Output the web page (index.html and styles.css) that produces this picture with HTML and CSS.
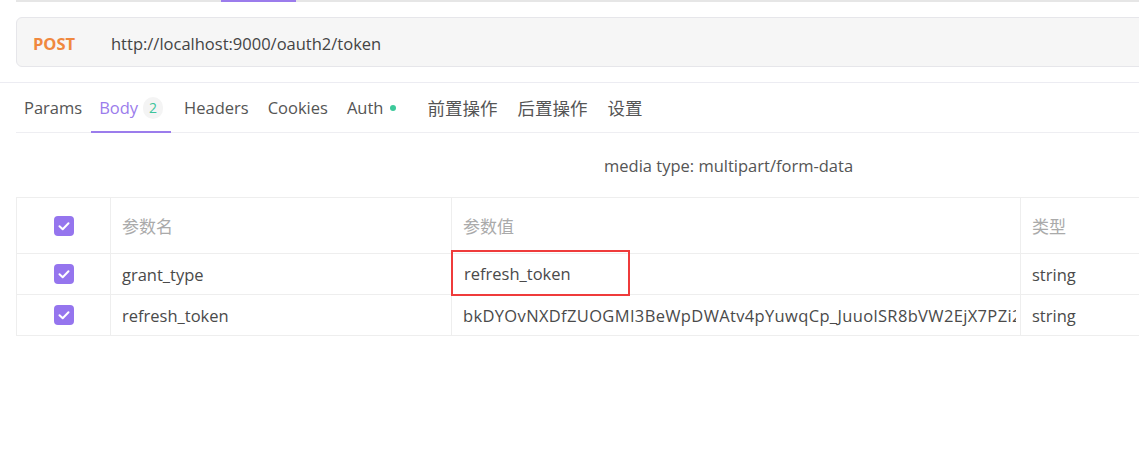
FILE: index.html
```html
<!DOCTYPE html>
<html>
<head>
<meta charset="utf-8">
<link rel="stylesheet" href="styles.css">
</head>
<body>
<div class="topline"><span class="topmark"></span></div>
<div class="urlwrap">
  <div class="urlbox">
    <span class="method">POST</span>
    <span class="url">http://localhost:9000/oauth2/token</span>
  </div>
</div>
<div class="divider"></div>
<div class="tabs">
  <span class="tab first">Params</span>
  <span class="tab active">Body <span class="badge">2</span></span>
  <span class="tab">Headers</span>
  <span class="tab">Cookies</span>
  <span class="tab">Auth <span class="dot"></span></span>
  <span class="tab cjk">前置操作</span>
  <span class="tab cjk">后置操作</span>
  <span class="tab cjk">设置</span>
</div>
<div class="media">media type: multipart/form-data</div>
<div class="table">
  <div class="row head">
    <div class="cell c-check"><span class="cb"><svg viewBox="0 0 20 20" width="20" height="20"><path d="M5.5 10.2 L8.7 13.2 L14.5 7.3" fill="none" stroke="#fff" stroke-width="2" stroke-linecap="round" stroke-linejoin="round"/></svg></span></div>
    <div class="cell c-name muted">参数名</div>
    <div class="cell c-val muted">参数值</div>
    <div class="cell c-type muted">类型</div>
  </div>
  <div class="row">
    <div class="cell c-check"><span class="cb"><svg viewBox="0 0 20 20" width="20" height="20"><path d="M5.5 10.2 L8.7 13.2 L14.5 7.3" fill="none" stroke="#fff" stroke-width="2" stroke-linecap="round" stroke-linejoin="round"/></svg></span></div>
    <div class="cell c-name">grant_type</div>
    <div class="cell c-val"><span class="hl">refresh_token</span></div>
    <div class="cell c-type">string</div>
  </div>
  <div class="row">
    <div class="cell c-check"><span class="cb"><svg viewBox="0 0 20 20" width="20" height="20"><path d="M5.5 10.2 L8.7 13.2 L14.5 7.3" fill="none" stroke="#fff" stroke-width="2" stroke-linecap="round" stroke-linejoin="round"/></svg></span></div>
    <div class="cell c-name">refresh_token</div>
    <div class="cell c-val"><span class="clip">bkDYOvNXDfZUOGMI3BeWpDWAtv4pYuwqCp_JuuolSR8bVW2EjX7PZi2</span></div>
    <div class="cell c-type">string</div>
  </div>
</div>
</body>
</html>
```
FILE: styles.css
```css
* { box-sizing: border-box; }
html, body { margin: 0; padding: 0; background: #fff; }
body {
  width: 1139px;
  height: 458px;
  overflow: hidden;
  font-family: "Open Sans", "Noto Sans CJK SC", sans-serif;
  font-size: 16.5px;
  color: #4a4a4a;
}
.topline {
  height: 17px;
  border-top: 2px solid #e6e6e6;
  position: relative;
  margin-left: 16px;
}
.topmark {
  position: absolute;
  left: 205px;
  top: -2px;
  width: 75px;
  height: 2px;
  background: #9b7cec;
}
.urlwrap { padding-left: 16px; }
.urlbox {
  height: 50px;
  width: 1140px;
  background: #f6f6f6;
  border: 1px solid #e6e6ea;
  border-radius: 6px;
  display: flex;
  align-items: center;
  padding-left: 16px;
  padding-top: 2px;
}
.method {
  color: #f0883e;
  font-weight: 700;
  width: 78px;
}
.url { color: #444; }
.divider {
  height: 1px;
  background: #ececf2;
  margin-top: 15px;
}
.tabs {
  margin-left: 16px;
  height: 50px;
  border-bottom: 1px solid #eeeef2;
  display: flex;
  align-items: stretch;
  padding-top: 1px;
}
.tab {
  display: flex;
  align-items: center;
  padding: 0 8px;
  margin-right: 3px;
  color: #555;
  border-bottom: 2px solid transparent;
  margin-bottom: -1px;
}
.tab.first { padding-right: 6px; }
.tab.active { color: #9b7cec; border-bottom-color: #9b7cec; margin-right: 5px; }
.badge {
  display: inline-flex;
  align-items: center;
  justify-content: center;
  width: 20px;
  height: 22px;
  border-radius: 11px;
  background: #f4f4f4;
  color: #3cc49a;
  font-size: 14px;
  margin-left: 5px;
}
.dot {
  width: 6px;
  height: 6px;
  border-radius: 50%;
  background: #3cc99a;
  margin-left: 7px;
  margin-right: 12px;
}
.tab.cjk { font-size: 17.5px; margin-right: 4px; }
.media {
  height: 64px;
  display: flex;
  align-items: center;
  padding-left: 604px;
  padding-top: 1px;
  color: #555;
}
.table {
  margin-left: 16px;
  width: 1140px;
  border-top: 1px solid #eeeeee;
  border-left: 1px solid #eeeeee;
}
.row {
  display: flex;
  height: 41px;
  border-bottom: 1px solid #eeeeee;
}
.row.head { height: 56px; }
.cell {
  flex-shrink: 0;
  display: flex;
  align-items: center;
  border-right: 1px solid #eeeeee;
  padding-left: 11px;
  white-space: nowrap;
  overflow: hidden;
  color: #4a4a4a;
}
.cell.muted { color: #aaa; font-size: 17px; }
.c-check { width: 94px; justify-content: center; padding-left: 0; }
.c-name { width: 341px; }
.c-val { width: 569px; position: relative; overflow: visible; padding-right: 4px; }
.clip {
  display: block;
  overflow: hidden;
  white-space: nowrap;
  letter-spacing: 0.35px;
  flex: 1;
}
.c-type { width: 140px; border-right: none; }
.cb {
  width: 20px;
  height: 20px;
  border-radius: 4px;
  background: #9575ee;
  display: block;
}
.cb svg { display: block; }
.hl {
  position: absolute;
  left: -1px;
  top: -4px;
  width: 179px;
  height: 46px;
  border: 2px solid #ef3b3b;
  display: flex;
  align-items: center;
  padding-left: 11px;
}
```
